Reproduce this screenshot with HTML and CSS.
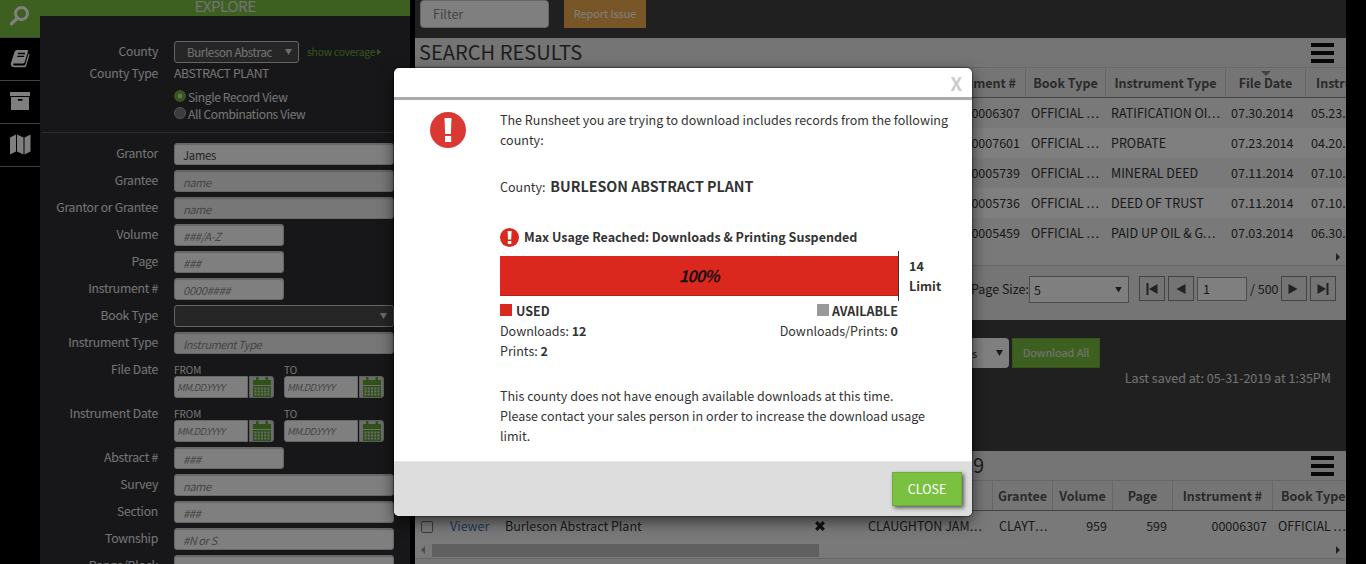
FILE: index.html
```html
<!DOCTYPE html>
<html lang="en">
<head>
<meta charset="utf-8">
<title>Explore</title>
<link rel="stylesheet" href="styles.css">
</head>
<body>
<div class="app">
  <nav class="rail">
    <a class="rail-item active"><svg width="20" height="20" viewBox="0 0 20 20"><circle cx="11.5" cy="7.5" r="6" fill="none" stroke="#fff" stroke-width="3"/><path d="M7.3 12 1.6 17.7" stroke="#fff" stroke-width="3.4" stroke-linecap="round"/></svg></a>
    <a class="rail-item"><svg width="20" height="19" viewBox="0 0 20 19"><path d="M7 1H17.2Q18.4 1 18 2.400L14.600 13.500Q14.200 14.500 13 14.500H3.500Q2.300 15.600 4 16.500H13.700Q14.900 16.500 15.300 15.400L18.600 4.500Q19.700 5 19.300 6.300L16.300 16.700Q15.700 18.300 14 18.300H4Q.6 18 .8 14.600L4.600 2.700Q5.200 1 7 1Z" fill="#fff"/><path d="M8 4.500H15M7.200 7.300H14.200" stroke="#000" stroke-width="1.300"/></svg></a>
    <a class="rail-item"><svg width="20" height="18" viewBox="0 0 20 18"><path d="M0 0H20V4H0ZM1 5H19V18H1Z" fill="#fff"/><rect x="8" y="7" width="4.500" height="1.700" fill="#000"/></svg></a>
    <a class="rail-item"><svg width="21" height="21" viewBox="0 0 21 21"><path d="M0 3.500 6 .5V17.500L0 20.500ZM7 .5 13.500 3.500V20.500L7 17.500ZM14.500 3.500 20.500 .5V17.500L14.500 20.500Z" fill="#fff"/></svg></a>
  </nav>

  <aside class="panel">
    <h1 class="panel-title">EXPLORE</h1>
    <div class="county">
      <div class="row"><span class="label">County</span><span class="select county-select"><span>Burleson Abstrac</span><i class="caret"></i></span><a class="coverage">show coverage<i></i></a></div>
      <div class="row type-row"><span class="label">County Type</span><span class="plant">ABSTRACT PLANT</span></div>
      <div class="radio"><i class="dot on"></i>Single Record View</div>
      <div class="radio"><i class="dot"></i>All Combinations View</div>
    </div>
    <div class="fields">
      <div class="row"><span class="label">Grantor</span><span class="input value">James</span></div>
      <div class="row"><span class="label">Grantee</span><span class="input dim">name</span></div>
      <div class="row"><span class="label">Grantor or Grantee</span><span class="input dim">name</span></div>
      <div class="row"><span class="label">Volume</span><span class="input short">###/A-Z</span></div>
      <div class="row"><span class="label">Page</span><span class="input short">###</span></div>
      <div class="row"><span class="label">Instrument #</span><span class="input short">0000####</span></div>
      <div class="row"><span class="label">Book Type</span><span class="select"><i class="caret"></i></span></div>
      <div class="row"><span class="label">Instrument Type</span><span class="input dim">Instrument Type</span></div>
      <div class="row dates"><span class="label">File Date</span>
        <div class="date"><b>FROM</b><div class="date-box"><span>MM.DD.YYYY</span><i><svg class="cal" width="18" height="20" viewBox="0 0 18 20"><use href="#cal"/></svg></i></div></div>
        <div class="date"><b>TO</b><div class="date-box"><span>MM.DD.YYYY</span><i><svg class="cal" width="18" height="20" viewBox="0 0 18 20"><use href="#cal"/></svg></i></div></div>
      </div>
      <div class="row dates"><span class="label">Instrument Date</span>
        <div class="date"><b>FROM</b><div class="date-box"><span>MM.DD.YYYY</span><i><svg class="cal" width="18" height="20" viewBox="0 0 18 20"><use href="#cal"/></svg></i></div></div>
        <div class="date"><b>TO</b><div class="date-box"><span>MM.DD.YYYY</span><i><svg class="cal" width="18" height="20" viewBox="0 0 18 20"><use href="#cal"/></svg></i></div></div>
      </div>
      <div class="row"><span class="label">Abstract #</span><span class="input short">###</span></div>
      <div class="row"><span class="label">Survey</span><span class="input">name</span></div>
      <div class="row"><span class="label">Section</span><span class="input">###</span></div>
      <div class="row"><span class="label">Township</span><span class="input">#N or S</span></div>
      <div class="row"><span class="label">Range/Block</span><span class="input"></span></div>
    </div>
  </aside>

  <main class="main">
    <div class="toolbar"><span class="filter">Filter</span><span class="report">Report Issue</span></div>

    <section class="grid results">
      <header class="grid-title"><h2>SEARCH RESULTS</h2><i class="burger"></i></header>
      <div class="tr head"><span class="num">Instrument #</span><span>Book Type</span><span>Instrument Type</span><span class="sorted">File Date</span><span class="cut">Instrument Date</span></div>
      <div class="tr odd"><span class="num">00006307</span><span>OFFICIAL <em>...</em></span><span>RATIFICATION OI<em>...</em></span><span>07.30.2014</span><span>05.23.2014</span></div>
      <div class="tr"><span class="num">00007601</span><span>OFFICIAL <em>...</em></span><span>PROBATE</span><span>07.23.2014</span><span>04.20.2014</span></div>
      <div class="tr odd"><span class="num">00005739</span><span>OFFICIAL <em>...</em></span><span>MINERAL DEED</span><span>07.11.2014</span><span>07.10.2014</span></div>
      <div class="tr"><span class="num">00005736</span><span>OFFICIAL <em>...</em></span><span>DEED OF TRUST</span><span>07.11.2014</span><span>07.10.2014</span></div>
      <div class="tr odd"><span class="num">00005459</span><span>OFFICIAL <em>...</em></span><span>PAID UP OIL &amp; G<em>...</em></span><span>07.03.2014</span><span>06.30.2014</span></div>
      <div class="hscroll"><i class="tri right"></i></div>
      <footer class="pager">
        <span class="size-label">Page Size:</span>
        <span class="size">5<i class="caret"></i></span>
        <span class="pg"><svg width="12" height="12" viewBox="0 0 12 12"><path d="M.5 0h2v12h-2zM11.500 1v10L3 6z"/></svg></span>
        <span class="pg"><svg width="12" height="12" viewBox="0 0 12 12"><path d="M10.500 1v10L1.500 6z"/></svg></span>
        <span class="pg-input">1</span><span class="total">/ 500</span>
        <span class="pg"><svg width="12" height="12" viewBox="0 0 12 12"><path d="M.5 1v10L9.500 6z"/></svg></span>
        <span class="pg"><svg width="12" height="12" viewBox="0 0 12 12"><path d="M9.500 0h2v12h-2zM.5 1v10L9 6z"/></svg></span>
      </footer>
    </section>

    <section class="actions">
      <div class="download"><span class="format">s<i class="caret"></i></span><span class="btn">Download All</span></div>
      <p class="saved">Last saved at: 05-31-2019 at 1:35PM</p>
    </section>

    <section class="grid runsheet">
      <header class="grid-title"><h2 class="sheet-name">9</h2><i class="burger"></i></header>
      <div class="tr head"><span></span><span></span><span></span><span></span><span></span><span>Grantee</span><span>Volume</span><span>Page</span><span>Instrument #</span><span class="cut">Book Type</span></div>
      <div class="tr odd"><span class="check"><i></i></span><span class="link">Viewer</span><span>Burleson Abstract Plant</span><span class="remove"><svg width="10" height="10" viewBox="0 0 10 10"><path d="M1.200 1.200 8.800 8.800M8.800 1.200 1.200 8.800" stroke="#222" stroke-width="3.200"/></svg></span><span>CLAUGHTON JAM<em>...</em></span><span>CLAYT<em>...</em></span><span class="num">959</span><span class="num">599</span><span class="num">00006307</span><span class="last">OFFICIAL <em>...</em></span></div>
      <div class="hscroll bottom"><i class="tri left"></i><i class="thumb"></i><i class="tri right"></i></div>
    </section>
  </main>
</div>

<div class="overlay">
  <div class="modal">
    <header class="modal-head"><span>X</span></header>
    <div class="modal-body">
      <svg class="alert" width="36" height="36" viewBox="0 0 36 36"><circle cx="18" cy="18" r="18" fill="#da3833"/><path d="M14.500 6h7l-.6 16h-5.800zM15 24h6.200v6H15z" fill="#fff"/></svg>
      <div class="content">
        <p class="intro">The Runsheet you are trying to download includes records from the following county:</p>
        <p class="which">County: <b>BURLESON ABSTRACT PLANT</b></p>
        <p class="warn"><svg width="19" height="19" viewBox="0 0 19 19"><circle cx="9.500" cy="9.500" r="9.500" fill="#db281e"/><path d="M7.600 3h4l-.4 8.500H8zM7.800 13h3.500v3H7.800z" fill="#fff"/></svg>Max Usage Reached: Downloads &amp; Printing Suspended</p>
        <div class="usage"><div class="bar"><span>100%</span></div><div class="limit">14<br>Limit</div></div>
        <div class="legend">
          <div><b><i class="sw used"></i>USED</b><br>Downloads: <b>12</b><br>Prints: <b>2</b></div>
          <div class="avail"><b><i class="sw"></i>AVAILABLE</b><br>Downloads/Prints: <b>0</b></div>
        </div>
        <p class="note">This county does not have enough available downloads at this time.<br>Please contact your sales person in order to increase the download usage limit.</p>
      </div>
    </div>
    <footer class="modal-foot"><span class="close">CLOSE</span></footer>
  </div>
</div>

<svg width="0" height="0"><defs><g id="cal">
  <path d="M3 0h2.500v3h7V0H15v3h3v5H0V3h3z"/><path d="M0 9h18v11H0z"/>
  <path d="M1.500 11.500h15M1.500 14.500h15M1.500 17.500h15" stroke="#d8d8d8" stroke-width="1.800" stroke-dasharray="2 1.250"/>
</g></defs></svg>
</body>
</html>
```
FILE: styles.css
```css
* { box-sizing: border-box; }
html, body { margin: 0; height: 564px; overflow: hidden; background: #000; }
body { font-family: "Noto Sans CJK SC", "Noto Sans", sans-serif; font-size: 12.5px; line-height: 20px; color: #333; }
h1, h2, p { margin: 0; font-weight: 400; }
i { font-style: normal; }
.app { display: flex; width: 1366px; height: 564px; overflow: hidden; }

.rail { width: 40px; flex: none; }
.rail-item { display: flex; align-items: center; justify-content: center; height: 43px; padding-bottom: 2px; border-bottom: 1px solid #808080; }
.rail-item.active { height: 38px; background: #7ac142; padding-bottom: 6px; }

.panel { width: 370px; height: 564px; flex: none; background: #2e2e32; color: #e8e8e8; overflow: hidden; }
.panel-title { height: 16px; background: #7ac142; font-size: 15.2px; line-height: 11px; text-align: center; color: #e4e4e4; letter-spacing: -.55px; }
.row { display: flex; }
.label { width: 118px; margin-right: 16px; text-align: right; white-space: nowrap; flex: none; letter-spacing: -.25px; font-size: 12.2px; }
.county { height: 117px; margin-left: 2px; padding-top: 25px; border-bottom: 1px solid #5a5a5e; }
.county .label { width: 116px; }
.county .row { height: 22px; line-height: 20px; }
.plant { font-size: 12.2px; letter-spacing: -.35px; }
.select { display: flex; align-items: center; justify-content: flex-end; width: 220px; height: 22px; padding: 0 6px 0 12px; border: 1px solid #c8c8c8; border-radius: 3px; background: #4c4c4c; font-size: 11.5px; letter-spacing: -.35px; white-space: nowrap; }
.county-select { width: 125px; justify-content: space-between; }
.caret { width: 7px; height: 6px; background: #d8d8d8; clip-path: polygon(0 0, 100% 0, 50% 100%); flex: none; }
.coverage { display: flex; align-items: center; margin-left: 8px; color: #6aad3a; font-size: 10.4px; letter-spacing: -.25px; white-space: nowrap; }
.coverage i { margin-left: 2px; border: 3px solid transparent; border-left: 4px solid #6aad3a; border-right: 0; }
.radio { display: flex; align-items: center; height: 17px; margin-left: 132px; font-size: 12px; letter-spacing: -.35px; line-height: 16px; white-space: nowrap; }
.type-row { margin-bottom: 3px; }
.dot { width: 12px; height: 12px; margin: -2px 2px 0 0; border-radius: 50%; background: #77787d; border: 1px solid #aaa; }
.dot.on { background: radial-gradient(circle, #ddd 0 2px, #6cae38 2.500px); border-color: #6cae38; }

.fields { display: flex; flex-direction: column; gap: 5px; padding-top: 10px; }
.fields .row { height: 22px; flex: none; line-height: 20px; }
.input { width: 220px; height: 22px; padding-left: 8px; border: 1px solid #cfcfcf; border-radius: 3px; background: #fff; color: #8b8b8b; font-size: 11.2px; letter-spacing: -.5px; line-height: 22px; font-style: italic; box-shadow: inset 0 1px 1px rgba(0,0,0,.2); }
.dim { background: #efefef; }
.short { width: 110px; letter-spacing: -.3px; }
.value { font-style: normal; color: #444; letter-spacing: -.2px; }
.fields .dates { height: 39px; }
.date { width: 110px; }
.date b { display: block; height: 17px; font-weight: 400; font-size: 10px; line-height: 22px; }
.date-box { display: flex; width: 100px; height: 22px; gap: 1px; }
.date-box span { width: 74px; padding-left: 2px; border: 1px solid #cfcfcf; border-radius: 3px 0 0 3px; background: #fff; color: #8b8b8b; font-size: 9.6px; letter-spacing: -.6px; line-height: 21px; font-style: italic; }
.date-box i { display: flex; align-items: center; justify-content: center; width: 25px; border: 1px solid #bbb; border-radius: 0 3px 3px 0; background: #d8d8d8; }
.cal { fill: #5da52f; }

.main { width: 931px; margin-left: 5px; flex: none; overflow: hidden; background: #404040; }
.toolbar { display: flex; height: 38px; padding-left: 5px; }
.filter { width: 129px; height: 28px; padding-left: 12px; border: 1px solid #ccc; border-radius: 4px; background: #fff; color: #888; line-height: 25px; font-size: 12.5px; }
.report { width: 82px; height: 28px; margin-left: 15px; background: #f0ad4e; color: #fff; font-size: 10.8px; line-height: 27px; text-align: center; }

.grid { background: #eaeaea; }
.grid-title { display: flex; justify-content: space-between; align-items: center; height: 30px; padding: 0 12px 0 4px; border-bottom: 1px solid #d0d0d0; }
.grid-title h2 { font-size: 20.1px; line-height: 27px; padding-bottom: 2px; color: #3c3c3c; }
.grid-title .sheet-name { margin-left: 554px; }
.burger { width: 23px; height: 20px; background: linear-gradient(#111 0 4px, transparent 4px 8px, #111 8px 12px, transparent 12px 16px, #111 16px); }
.tr { display: grid; grid-template-columns: 611px 80px 120px 80px 100px; height: 30px; line-height: 30px; background: #fff; white-space: nowrap; overflow: hidden; width: 931px; }
.odd { background: #f2f2f2; }
.tr > span { padding: 0 6px 0 5px; overflow: hidden; }
.tr em { font-style: normal; letter-spacing: 1px; }
.tr .num { text-align: right; }
.head { background: #eaeaea; font-weight: 700; border-bottom: 1px solid #888; color: #555; }
.tr.head > span { border-right: 1px solid #cfcfcf; text-align: center; padding: 0; }
.tr.head > .num { text-align: right; padding-right: 9px; }
.tr.head > .cut { text-align: left; padding-left: 10px; border-right: 0; }
.sorted { position: relative; }
.sorted::before { content: ""; position: absolute; top: 3px; left: 35px; border: 5px solid transparent; border-top-color: #888; border-bottom: 0; }
.hscroll { display: flex; align-items: center; height: 17px; padding: 0 6px; border-bottom: 1px solid #cfcfcf; background: #f2f2f2; }
.tri { border: 4px solid transparent; }
.tri.right { margin-left: auto; border-left: 4px solid #444; border-right: 0; }
.tri.left { border-right: 4px solid #999; border-left: 0; margin-right: 7px; }
.results .hscroll { height: 18px; }
.pager { display: flex; align-items: flex-start; height: 54px; padding: 10px 10px 0 0; justify-content: flex-end; gap: 3px; }
.pager > span { height: 25px; line-height: 25px; }
.size-label { margin-right: -3px; }
.pager .size { display: flex; justify-content: space-between; align-items: center; width: 100px; height: 27px; margin-right: 7px; padding: 0 6px 0 4px; border: 1px solid #999; background: #fff; }
.size .caret, .format .caret { background: #333; }
.pg { display: flex; align-items: center; justify-content: center; width: 26px; border: 1px solid #888; background: #e8e8e8; fill: #444; }
.pager .pg-input { width: 50px; height: 24px; margin-top: 1px; padding-left: 5px; border: 1px solid #999; background: #fff; line-height: 22px; }
.total { width: 28px; white-space: nowrap; }

.actions { height: 131px; padding-top: 18px; }
.download { display: flex; gap: 3px; }
.format { display: flex; align-items: center; justify-content: space-between; width: 39px; margin-left: 555px; height: 30px; padding: 0 6px 0 2px; border-radius: 4px; background: #fff; font-size: 11px; }
.btn { width: 88px; height: 30px; background: #7ac142; border: 1px solid #6aab35; color: #e8e8e8; font-size: 11px; line-height: 27px; text-align: center; letter-spacing: -.1px; }
.saved { text-align: right; padding-right: 15px; color: #e4e4e4; font-size: 12.55px; }

.runsheet { height: 113px; }
.runsheet .tr { grid-template-columns: 29px 55px 310px 53px 131px 60px 60px 60px 100px 74px; }
.runsheet .tr > span { padding-left: 6px; }
.runsheet .tr > .last { padding-left: 5px; padding-right: 0; }
.runsheet .tr.head > span { padding-left: 0; }
.runsheet .tr.head > span:nth-child(-n+4) { border-right: 0; }
.runsheet .odd { height: 31px; }
.runsheet .tr.head > .cut { padding-left: 8px; }
.check { display: flex; align-items: center; }
.check i { width: 12px; height: 12px; border: 1px solid #777; border-radius: 2px; background: #f5f5f5; }
.link { color: #3d6fae; }
.hscroll.bottom { height: 17px; }
.thumb { width: 387px; height: 13px; background: #c1c1c1; }

.overlay { position: absolute; inset: 0; background: rgba(0,0,0,.5); }
.modal { position: absolute; left: 394px; top: 68px; width: 578px; height: 448px; border-radius: 5px; background: #fff; box-shadow: 0 5px 15px rgba(0,0,0,.6), 0 0 2px #000; overflow: hidden; }
.modal-head { height: 32px; padding-right: 10px; border-bottom: 3px solid #aaa9ad; text-align: right; color: #ccc; font-size: 18.5px; font-weight: 700; line-height: 31px; }
.modal-body { display: flex; height: 361px; padding: 12px 16px 0 36px; }
.alert { flex: none; margin-right: 34px; }
.content { width: 456px; font-size: 12.53px; }
.intro { margin-top: -2px; }
.which { margin-top: 26px; }
.which b { margin-left: 2px; font-size: 14.25px; }
.warn { display: flex; align-items: center; gap: 5px; margin-top: 30px; font-weight: 700; }
.usage { display: flex; align-items: center; height: 50px; margin-top: 4px; }
.bar { width: 398px; height: 40px; background: #db281e; border-bottom: 1px solid #b8211a; line-height: 38px; text-align: center; color: #111; font-size: 16px; letter-spacing: -.6px; font-style: italic; font-weight: 500; -webkit-text-stroke: .3px #111; }
.limit { height: 50px; padding: 5px 0 0 10px; border-left: 1px solid #333; font-weight: 700; }
.legend { display: flex; justify-content: space-between; width: 398px; }
.avail { text-align: right; }
.sw { display: inline-block; width: 12px; height: 12px; margin-right: 3px; background: #999; }
.used { background: #db281e; margin-right: 4px; }
.note { margin-top: 25px; }
.modal-foot { display: flex; justify-content: flex-end; height: 55px; padding: 10px 10px 0 0; border-top: 1px solid #e5e5e5; background: #ddd; }
.close { width: 70px; height: 34px; background: #7ac142; border: 1px solid #6bab38; box-shadow: 2px 2px 4px rgba(0,0,0,.6); color: #fff; line-height: 32px; text-align: center; }
```
